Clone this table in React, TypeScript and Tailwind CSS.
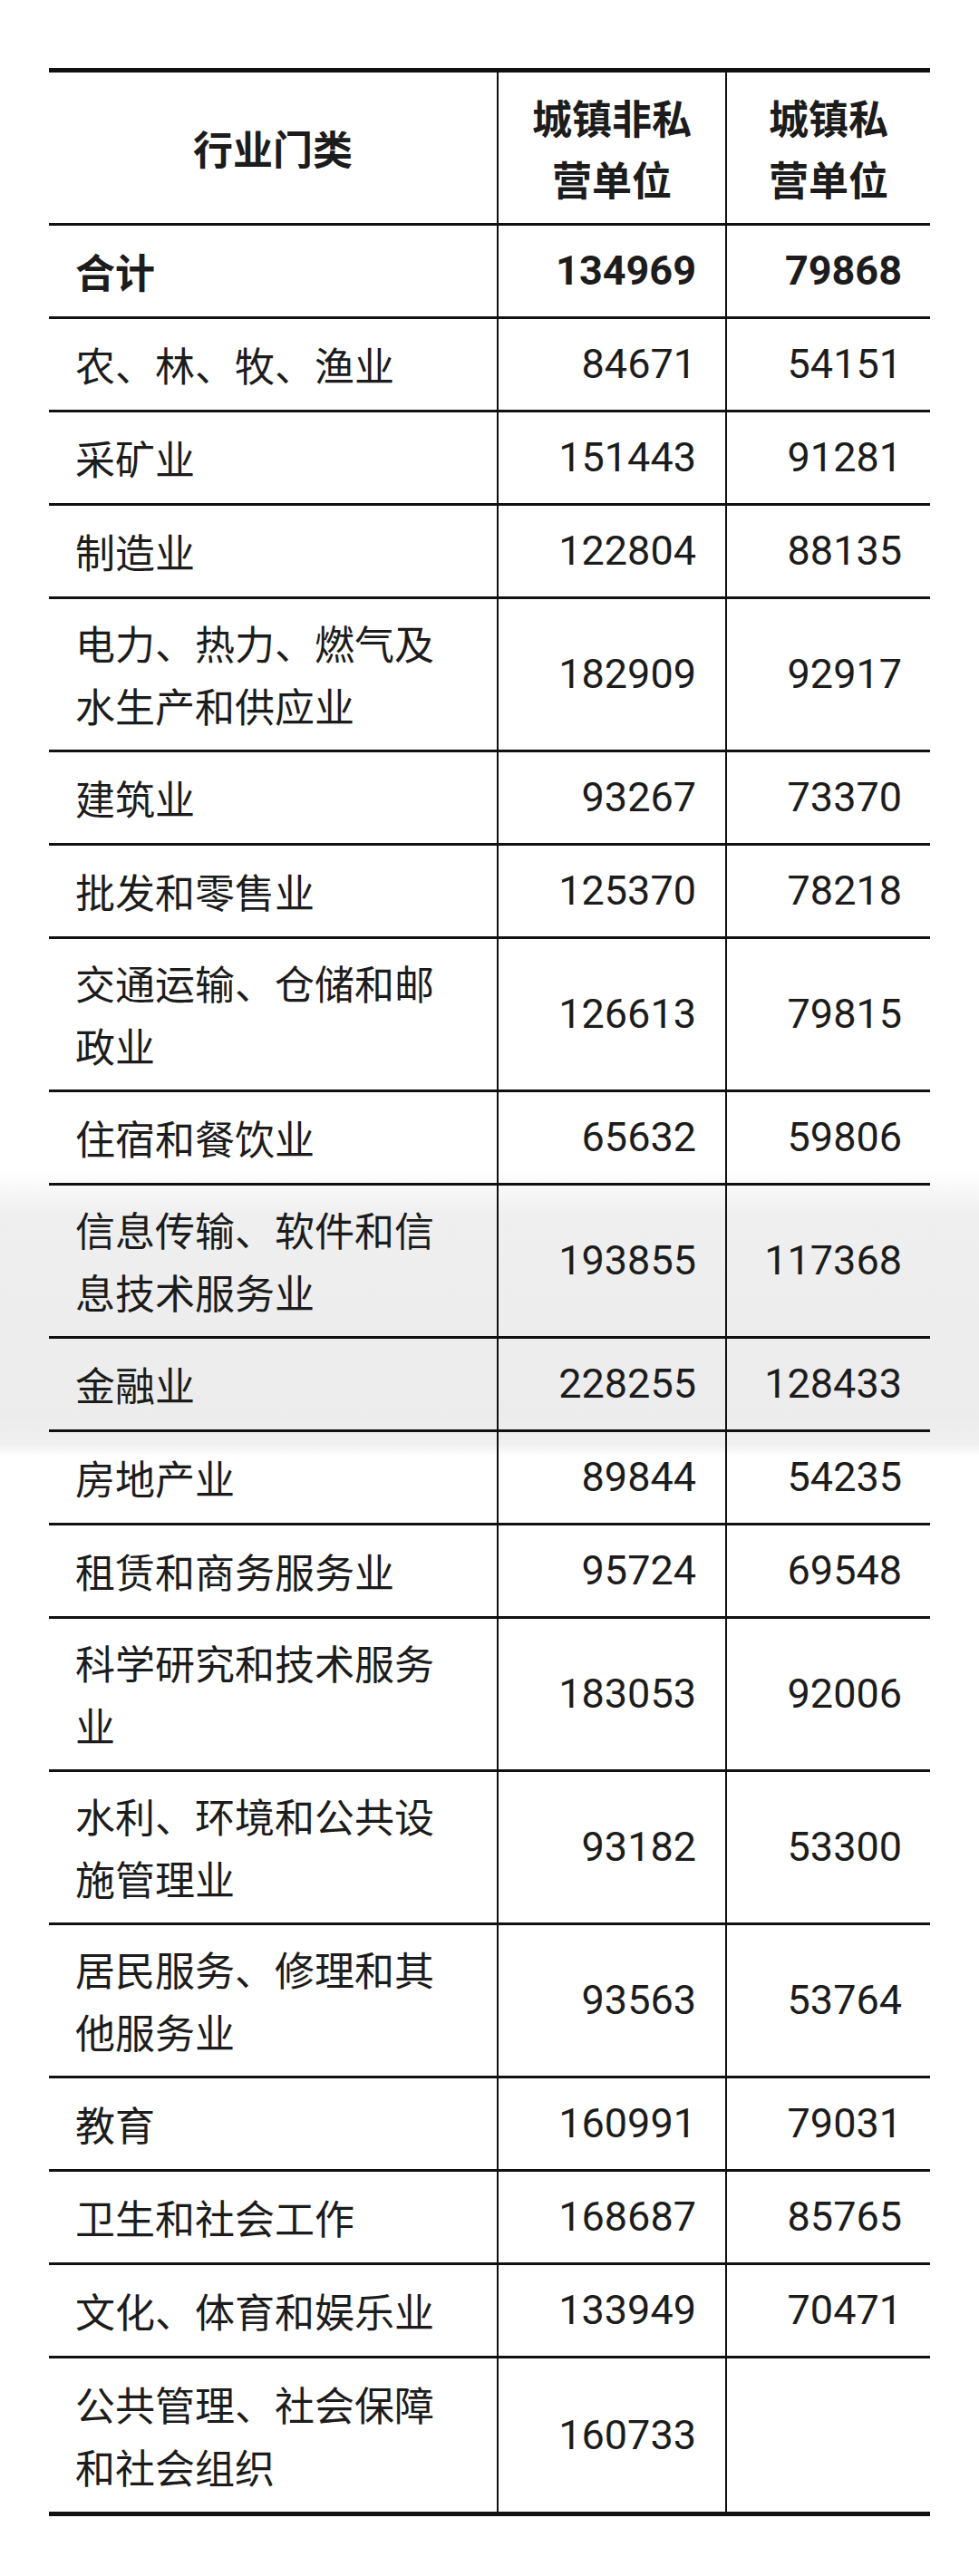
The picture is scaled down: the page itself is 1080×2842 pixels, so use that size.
const rows: { name: string[]; a: string; b: string; bold?: boolean }[] = [
  { name: ["合计"], a: "134969", b: "79868", bold: true },
  { name: ["农、林、牧、渔业"], a: "84671", b: "54151" },
  { name: ["采矿业"], a: "151443", b: "91281" },
  { name: ["制造业"], a: "122804", b: "88135" },
  { name: ["电力、热力、燃气及", "水生产和供应业"], a: "182909", b: "92917" },
  { name: ["建筑业"], a: "93267", b: "73370" },
  { name: ["批发和零售业"], a: "125370", b: "78218" },
  { name: ["交通运输、仓储和邮", "政业"], a: "126613", b: "79815" },
  { name: ["住宿和餐饮业"], a: "65632", b: "59806" },
  { name: ["信息传输、软件和信", "息技术服务业"], a: "193855", b: "117368" },
  { name: ["金融业"], a: "228255", b: "128433" },
  { name: ["房地产业"], a: "89844", b: "54235" },
  { name: ["租赁和商务服务业"], a: "95724", b: "69548" },
  { name: ["科学研究和技术服务", "业"], a: "183053", b: "92006" },
  { name: ["水利、环境和公共设", "施管理业"], a: "93182", b: "53300" },
  { name: ["居民服务、修理和其", "他服务业"], a: "93563", b: "53764" },
  { name: ["教育"], a: "160991", b: "79031" },
  { name: ["卫生和社会工作"], a: "168687", b: "85765" },
  { name: ["文化、体育和娱乐业"], a: "133949", b: "70471" },
  { name: ["公共管理、社会保障", "和社会组织"], a: "160733", b: "" },
];

const cjk = "font-['Noto_Sans_CJK_SC',sans-serif]";
const num = "font-['Roboto','Noto_Sans_CJK_SC',sans-serif]";

export default function App() {
  return (
    <div className="h-[2842px] w-[1080px] bg-[linear-gradient(180deg,#fff_0,#fff_1290px,#efefef_1340px,#ececec_1560px,#f0f0f0_1594px,#fff_1606px,#fff_100%)] px-[54px] pt-[75px] text-[#1c1c1c]">
      <div className="border-y-[5px] border-[#111]">
        <div className="grid h-[169px] grid-cols-[496px_252px_224px] border-b-[3px] border-[#111]">
          <div className={`flex items-center justify-center border-r-2 border-[#111] text-[44px] font-bold ${cjk}`}>行业门类</div>
          <div className={`flex flex-col items-center justify-center border-r-2 border-[#111] text-[44px] leading-[68px] font-bold ${cjk}`}>
            <span>城镇非私</span>
            <span>营单位</span>
          </div>
          <div className={`flex flex-col items-center justify-center text-[44px] leading-[68px] font-bold ${cjk}`}>
            <span>城镇私</span>
            <span>营单位</span>
          </div>
        </div>
        {rows.map((r, i) => (
          <div
            key={r.name.join("")}
            className={`grid grid-cols-[496px_252px_224px] border-[#111] ${r.name.length > 1 ? "h-[169px]" : "h-[103px]"} ${i < rows.length - 1 ? "border-b-[3px]" : ""}`}
          >
            <div className={`flex flex-col justify-center border-r-2 border-[#111] pl-[29px] text-[44px] leading-[69px] ${r.bold ? "font-bold" : "font-normal"} ${cjk}`}>
              {r.name.map((line) => (
                <span key={line}>{line}</span>
              ))}
            </div>
            <div className={`flex items-center justify-end border-r-2 border-[#111] pr-[32px] text-[45px] ${r.bold ? "font-bold" : "font-normal"} ${num}`}>{r.a}</div>
            <div className={`flex items-center justify-end pr-[31px] text-[45px] ${r.bold ? "font-bold" : "font-normal"} ${num}`}>{r.b}</div>
          </div>
        ))}
      </div>
    </div>
  );
}
